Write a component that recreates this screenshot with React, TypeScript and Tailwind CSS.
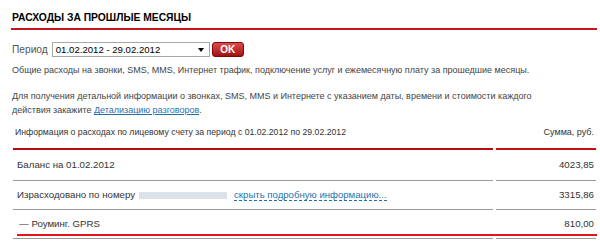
import React from "react"

const font = { fontFamily: '"Liberation Sans", Arial, sans-serif' }

function Row({
  left,
  right,
  height,
}: {
  left: React.ReactNode
  right: string
  height: string
}) {
  return (
    <div className="grid grid-cols-[480px_100px] gap-x-[3px]">
      <div className={`flex items-center border-b border-[#9a9a9a] pl-[4px] text-[9.7px] text-[#333] ${height}`}>
        {left}
      </div>
      <div className={`flex items-center justify-end border-b border-[#9a9a9a] pr-[2px] text-[9.7px] text-[#333] ${height}`}>
        {right}
      </div>
    </div>
  )
}

export default function App() {
  return (
    <div className="h-[243px] w-[600px] overflow-hidden bg-white" style={font}>
      <div className="pl-[11px] pr-[3px]">
        <div className="border-b-2 border-[#c8141b] pb-[3px] pl-[1px] pt-[11px]">
          <h1 className="text-[10.3px] font-bold leading-[14px] text-black">
            РАСХОДЫ ЗА ПРОШЛЫЕ МЕСЯЦЫ
          </h1>
        </div>

        <div className="mt-[12px] flex items-center pl-[1px]">
          <span className="text-[10.2px] text-[#555]">Период</span>
          <div className="ml-[4px] flex h-[15px] w-[158px] items-center justify-between border border-[#a7a7a7] bg-white pl-[3px] pr-[5px]">
            <span className="text-[9.6px] leading-none text-black">01.02.2012 - 29.02.2012</span>
            <span className="h-0 w-0 border-x-[3px] border-t-[4px] border-x-transparent border-t-black" />
          </div>
          <button className="ml-[2px] flex h-[15px] w-[32px] items-center justify-center rounded-[3px] border border-[#7d0a0a] bg-gradient-to-b from-[#de4a4a] to-[#a10f0f] text-[10px] font-bold leading-none text-white">
            OK
          </button>
        </div>

        <p className="mt-[7px] whitespace-nowrap pl-[1px] text-[9px] leading-[12px] text-[#444]">
          Общие расходы на звонки, SMS, MMS, Интернет трафик, подключение услуг и ежемесячную плату за прошедшие месяцы.
        </p>

        <p className="mt-[13px] whitespace-nowrap pl-[1px] text-[9px] leading-[14px] text-[#444]">
          Для получения детальной информации о звонках, SMS, MMS и Интернете с указанием даты, времени и стоимости каждого
          <br />
          действия закажите <a className="text-[#1f72ad] underline">Детализацию разговоров</a>.
        </p>

        <div className="pl-[2px]">
          <div className="grid grid-cols-[480px_100px] gap-x-[3px]">
            <div className="flex h-[33px] items-center border-b-2 border-[#b30d0d] pl-[2px] text-[8.7px] text-[#333]">
              Информация о расходах по лицевому счету за период с 01.02.2012 по 29.02.2012
            </div>
            <div className="flex h-[33px] items-center justify-end border-b-2 border-[#c80f0f] pr-[2px] text-[9px] text-[#333]">
              Сумма, руб.
            </div>
          </div>
          <Row left="Баланс на 01.02.2012" right="4023,85" height="h-[31px]" />
          <Row
            height="h-[29px]"
            left={
              <>
                <span>Израсходовано по номеру</span>
                <span className="ml-[4px] h-[7px] w-[88px] bg-[#dbe3e8]" />
                <a className="ml-[7px] border-b border-dashed border-[#1f72ad] leading-[11px] text-[9.6px] text-[#1f72ad]">
                  скрыть подробную информацию...
                </a>
              </>
            }
            right="3315,86"
          />
          <div className="relative">
            <Row
              height="h-[29px]"
              left={<span className="pl-[2px]">— Роуминг. GPRS</span>}
              right="810,00"
            />
            <div className="absolute bottom-[3px] left-[4px] right-0 h-[2px] bg-[#e8121b]" />
          </div>
        </div>
      </div>
    </div>
  )
}
